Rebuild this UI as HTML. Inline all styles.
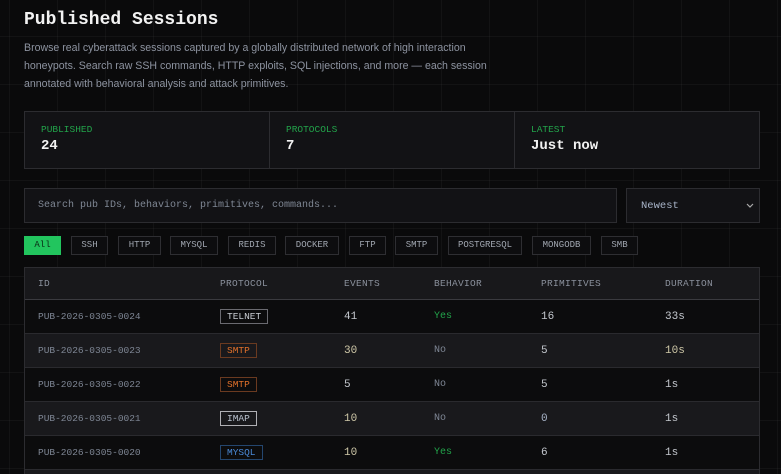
<!DOCTYPE html>
<html><head><meta charset="utf-8"><style>
*{box-sizing:border-box;margin:0;padding:0}
html{width:781px;height:474px;overflow:hidden}
body{width:781px;height:474px;overflow:hidden;background:#0a0a0b;
background-image:linear-gradient(rgba(255,255,255,0.035) 1px,transparent 1px),linear-gradient(90deg,rgba(255,255,255,0.035) 1px,transparent 1px);
background-size:48px 48px;background-position:9px 36px;color:#e6e6e6;font-family:"Liberation Mono",monospace;position:relative}
.abs{position:absolute}
h1{position:absolute;left:24px;top:10px;font-size:18px;font-weight:bold;color:#f2f2f2}
.desc{left:24px;top:39px;width:480px;font-family:"Liberation Sans",sans-serif;font-size:10.6px;line-height:18px;color:#8d93a0}
.stats{left:24px;top:111px;width:736px;height:58px;border:1px solid #2c2c30;background:#121215;display:flex}
.stat{flex:1;border-right:1px solid #2c2c30;padding:12px 0 0 16px}
.stat:last-child{border-right:none}
.stat .l{font-size:9.5px;color:#22a34a}
.stat .v{font-size:14px;font-weight:bold;color:#f2f2f2;margin-top:3px}
.search{left:24px;top:188px;width:593px;height:35px;border:1px solid #2c2c30;background:#121215;font-size:10px;color:#7f8794;padding:11px 0 0 13px}
.sel{left:626px;top:188px;width:134px;height:35px;border:1px solid #2c2c30;background:#121215;font-size:10.5px;color:#a8b4c8;padding:11px 0 0 14px}
.chip{position:absolute;top:236px;height:19px;border:1px solid #2e2e32;font-size:9px;color:#a0a6b0;text-align:center;line-height:17px;background:#0d0d0f}
.table{left:24px;top:267px;width:736px;height:207px;border:1px solid #2c2c30;border-bottom:none;overflow:hidden}
.row{position:absolute;left:0;width:734px;height:34px;border-bottom:1px solid #2a2a2e;font-size:11px}
.row span{position:absolute;top:11px}
.hd{top:0;height:32px;background:#18181b;border-bottom:1px solid #3a3a3f}
.hd span{font-size:9.5px;color:#8a909c;letter-spacing:.3px;top:10px}
.id{color:#7e8694;font-size:9.5px!important;left:13px}
.tag{font-size:9.5px;height:15px;line-height:13px;padding:0 6px;border:1px solid;top:9px!important}
</style></head><body>
<h1>Published Sessions</h1>
<div class="abs desc">Browse real cyberattack sessions captured by a globally distributed network of high interaction honeypots. Search raw SSH commands, HTTP exploits, SQL injections, and more — each session annotated with behavioral analysis and attack primitives.</div>
<div class="abs stats">
<div class="stat"><div class="l">PUBLISHED</div><div class="v">24</div></div>
<div class="stat"><div class="l">PROTOCOLS</div><div class="v">7</div></div>
<div class="stat"><div class="l">LATEST</div><div class="v">Just now</div></div>
</div>
<div class="abs search">Search pub IDs, behaviors, primitives, commands...</div>
<div class="abs sel">Newest<svg class="abs" style="left:119px;top:14px" width="8" height="6" viewBox="0 0 8 6"><path d="M1 1l3 3 3-3" stroke="#aaa" fill="none" stroke-width="1.2"/></svg></div>
<div class="chip" style="left:24px;width:37px;background:#22c55e;border-color:#22c55e;color:#0a2a14">All</div>
<div class="chip" style="left:71px;width:37px">SSH</div>
<div class="chip" style="left:118px;width:43px">HTTP</div>
<div class="chip" style="left:170px;width:48px">MYSQL</div>
<div class="chip" style="left:228px;width:48px">REDIS</div>
<div class="chip" style="left:285px;width:54px">DOCKER</div>
<div class="chip" style="left:349px;width:37px">FTP</div>
<div class="chip" style="left:395px;width:43px">SMTP</div>
<div class="chip" style="left:448px;width:74px">POSTGRESQL</div>
<div class="chip" style="left:532px;width:59px">MONGODB</div>
<div class="chip" style="left:601px;width:37px">SMB</div>
<div class="abs table">
<div class="row hd"><span style="left:13px">ID</span><span style="left:195px">PROTOCOL</span><span style="left:319px">EVENTS</span><span style="left:409px">BEHAVIOR</span><span style="left:516px">PRIMITIVES</span><span style="left:640px">DURATION</span></div>
<div class="row" style="top:32px;background:#0c0c0d"><span class="id">PUB-2026-0305-0024</span><span class="tag" style="left:195px;color:#c8ccd2;border-color:#6a6a70">TELNET</span><span style="left:319px;color:#c4c8ce">41</span><span style="left:409px;color:#22a34a;font-size:10px">Yes</span><span style="left:516px;color:#c4c8ce">16</span><span style="left:640px;color:#c4c8ce">33s</span></div>
<div class="row" style="top:66px;background:#19191c"><span class="id">PUB-2026-0305-0023</span><span class="tag" style="left:195px;color:#e0702a;border-color:#6a3a20">SMTP</span><span style="left:319px;color:#cfc8a8">30</span><span style="left:409px;color:#7e8694;font-size:10px">No</span><span style="left:516px;color:#c4c8ce">5</span><span style="left:640px;color:#cfc8a8">10s</span></div>
<div class="row" style="top:100px;background:#0c0c0d"><span class="id">PUB-2026-0305-0022</span><span class="tag" style="left:195px;color:#e0702a;border-color:#6a3a20">SMTP</span><span style="left:319px;color:#c4c8ce">5</span><span style="left:409px;color:#7e8694;font-size:10px">No</span><span style="left:516px;color:#c4c8ce">5</span><span style="left:640px;color:#c4c8ce">1s</span></div>
<div class="row" style="top:134px;background:#19191c"><span class="id">PUB-2026-0305-0021</span><span class="tag" style="left:195px;color:#b8c0cc;border-color:#b0b0b5">IMAP</span><span style="left:319px;color:#cfc8a8">10</span><span style="left:409px;color:#7e8694;font-size:10px">No</span><span style="left:516px;color:#a8b4c8">0</span><span style="left:640px;color:#c4c8ce">1s</span></div>
<div class="row" style="top:168px;background:#0c0c0d"><span class="id">PUB-2026-0305-0020</span><span class="tag" style="left:195px;color:#4a8ad8;border-color:#24466e">MYSQL</span><span style="left:319px;color:#cfc8a8">10</span><span style="left:409px;color:#22a34a;font-size:10px">Yes</span><span style="left:516px;color:#c4c8ce">6</span><span style="left:640px;color:#c4c8ce">1s</span></div>
<div class="row" style="top:202px;height:5px;border-bottom:none;background:#19191c"></div>
</div>
</body></html>
